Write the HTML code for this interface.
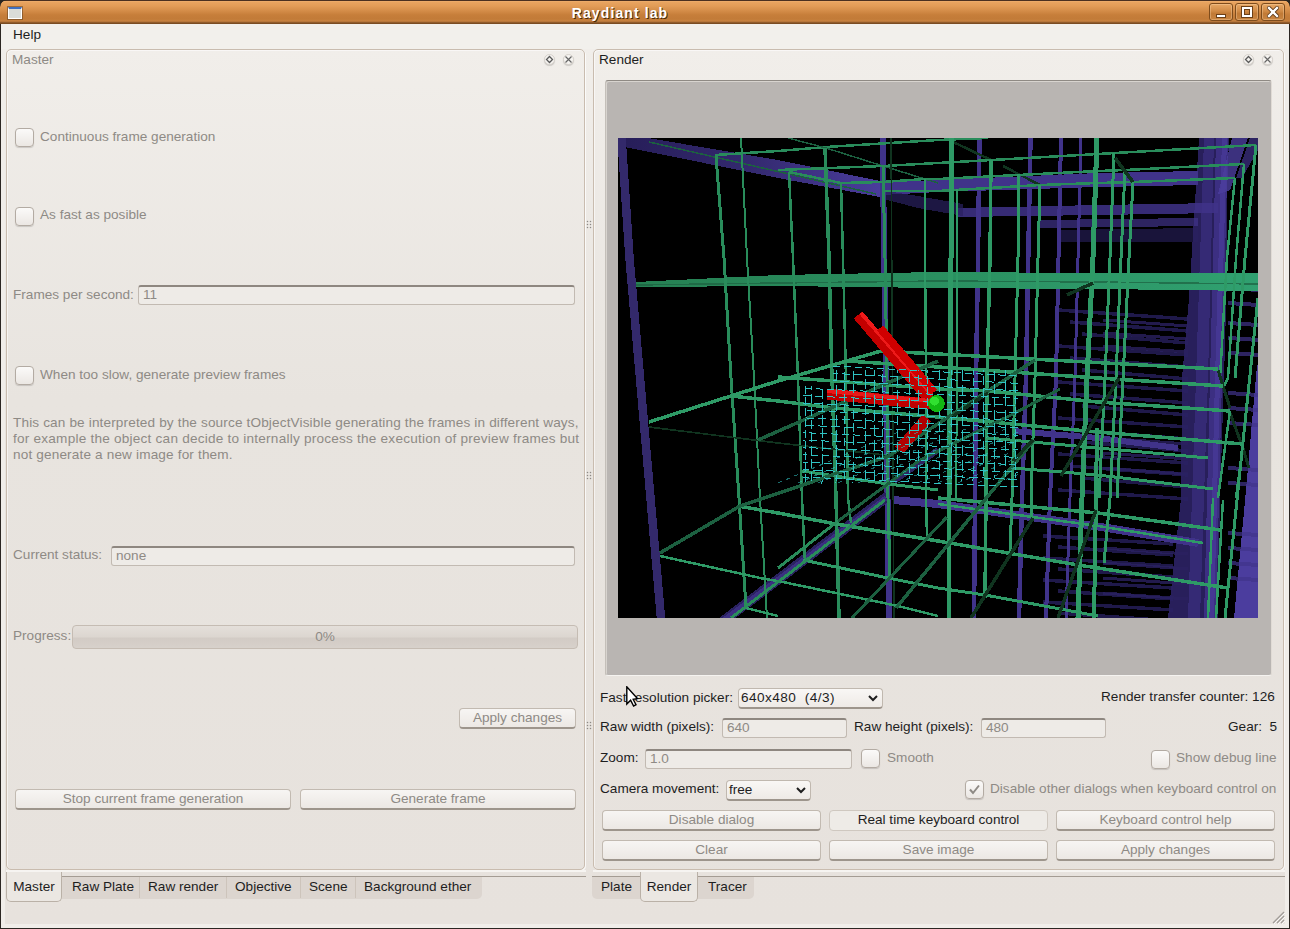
<!DOCTYPE html>
<html><head><meta charset="utf-8">
<style>
*{box-sizing:border-box;margin:0;padding:0}
html,body{width:1290px;height:929px;overflow:hidden;background:#2a2520}
body{font-family:"Liberation Sans",sans-serif;font-size:13.6px;color:#1e1e1e;position:relative}
.a{position:absolute}
.win{left:0;top:0;width:1290px;height:929px;background:#2b2622;border-radius:7px 7px 3px 3px;overflow:hidden}
.cont{left:1px;top:24px;width:1288px;height:904px;background:#f0ede9}
.inner{left:5px;top:49px;width:1280px;height:875px;background:linear-gradient(#f1eeea,#e8e4df 40%,#e7e2dd)}
.title{left:0;top:0;width:1290px;height:24px;background:linear-gradient(#4a3020 0,#4a3020 1px,#f0b272 1px,#e8a460 2px,#e29c57 6px,#d38c48 11px,#c67e3a 15px,#c27b38 19px,#c88241 21px,#a86c35 22px,#7a4c22 23px,#7a4c22 24px);border-radius:7px 7px 0 0}
.ttext{left:0;top:5px;width:1240px;text-align:center;color:#fff;font-weight:bold;font-size:14px;line-height:16px;text-shadow:1px 1px 0 #4a2a08;letter-spacing:1.1px}
.wbtn{top:3px;width:24px;height:18px;border:1px solid #7e4c1c;border-radius:3px;background:linear-gradient(#e7a866,#d08a45 45%,#c17a36 60%,#c98541);box-shadow:inset 0 0 0 1px rgba(255,220,180,.35)}
.menu{left:1px;top:24px;width:1288px;height:25px;background:#f2f0ec}
.lbl{white-space:nowrap;line-height:16px;height:16px}
.dis{color:#8e8a85}
.frame{border:1px solid #c9bcaf;border-radius:5px;box-shadow:1px 1px 0 rgba(255,255,255,.75),inset 1px 1px 0 rgba(255,255,255,.55)}
.chk{width:19px;height:19px;border:1px solid #b3aba3;border-radius:4px;background:linear-gradient(#fbfaf9,#ebe7e3);box-shadow:0 1px 1px rgba(0,0,0,.15)}
.inp{border:1px solid #c2bab2;border-top:2px solid #8e8780;border-radius:3px;background:#eeebe7;color:#8e8a85;padding-left:4px;line-height:16px}
.btn{border:1px solid #c2bab1;border-bottom:2px solid #9d958c;border-radius:4px;background:linear-gradient(#f7f5f3,#ece8e4);text-align:center;color:#8e8a85;line-height:17px}
.combo{border:1px solid #c0b8af;border-bottom:2px solid #9d958c;border-radius:4px;background:linear-gradient(#f9f7f5,#eeeae6);color:#1e1e1e;padding-left:2px;line-height:17px}
.tab{height:23px;background:#dcd5cf;border-top:1px solid #a49c93;line-height:21px;text-align:center;border-right:1px solid #cfc7bf}
.tabsel{background:#ebe7e2;border:1px solid #bab1a7;border-top:none;border-radius:0 0 5px 5px;line-height:16px;padding-top:7px;text-align:center}
.dock{width:11px;height:11px;border-radius:6px;border:1px solid #d6d1cb;background:#f5f3f0;box-shadow:0 1px 1px rgba(0,0,0,.15)}
.dots{width:6px;height:9px;background-image:radial-gradient(circle at 1.5px 1.5px,#8d8985 0.8px,transparent 1.2px);background-size:3px 3px}
</style></head><body>
<div class="a win">
  <div class="a cont"></div>
  <div class="a inner"></div>
  <div class="a title"></div>
  <div class="a" style="left:8px;top:7px;width:14px;height:12px;border:1px solid #fff;border-top:2px solid #3f6fc0;background:#dadcd8;box-shadow:0 0 0 1px rgba(90,60,30,.5)"></div>
  <div class="a ttext">Raydiant lab</div>
  <div class="a wbtn" style="left:1209px"><div class="a" style="left:6px;top:10px;width:10px;height:4px;background:#fff;border:1px solid #6b4018"></div></div>
  <div class="a wbtn" style="left:1235px"><div class="a" style="left:6px;top:3px;width:10px;height:10px;border:2px solid #fff;box-shadow:0 0 0 1px #6b4018,inset 0 0 0 1px #6b4018"></div></div>
  <div class="a wbtn" style="left:1261px"><svg class="a" style="left:5px;top:2px" width="12" height="12"><path d="M2 2L10 10M10 2L2 10" stroke="#5a3515" stroke-width="4" stroke-linecap="square"/><path d="M2 2L10 10M10 2L2 10" stroke="#fff" stroke-width="2.4" stroke-linecap="square"/></svg></div>
  <div class="a menu"></div>
  <div class="a lbl" style="left:13px;top:27px">Help</div>

  <!-- MASTER DOCK -->
  <div class="a frame" style="left:6px;top:49px;width:579px;height:821px"></div>
  <div class="a lbl dis" style="left:12px;top:52px">Master</div>
  <div class="a dock" style="left:544px;top:54px"></div>
  <svg class="a" style="left:544px;top:54px" width="11" height="11"><path d="M5.5 2.5L8.5 5.5L5.5 8.5L2.5 5.5Z" fill="none" stroke="#5a5a5a" stroke-width="1.3"/></svg>
  <div class="a dock" style="left:563px;top:54px"></div>
  <svg class="a" style="left:563px;top:54px" width="11" height="11"><path d="M2.5 2.5L8.5 8.5M8.5 2.5L2.5 8.5" stroke="#666" stroke-width="1.2"/></svg>

  <div class="a chk" style="left:15px;top:128px"></div>
  <div class="a lbl dis" style="left:40px;top:129px">Continuous frame generation</div>
  <div class="a chk" style="left:15px;top:207px"></div>
  <div class="a lbl dis" style="left:40px;top:207px">As fast as posible</div>
  <div class="a lbl dis" style="left:13px;top:287px">Frames per second:</div>
  <div class="a inp" style="left:138px;top:285px;width:437px;height:20px">11</div>
  <div class="a chk" style="left:15px;top:366px"></div>
  <div class="a lbl dis" style="left:40px;top:367px">When too slow, generate preview frames</div>
  <div class="a lbl dis" style="left:13px;top:415px;letter-spacing:0.14px">This can be interpreted by the source tObjectVisible generating the frames in different ways,</div>
  <div class="a lbl dis" style="left:13px;top:431px;letter-spacing:0.22px">for example the object can decide to internally process the execution of preview frames but</div>
  <div class="a lbl dis" style="left:13px;top:447px;letter-spacing:0.15px">not generate a new image for them.</div>
  <div class="a lbl dis" style="left:13px;top:547px">Current status:</div>
  <div class="a inp" style="left:111px;top:546px;width:464px;height:20px">none</div>
  <div class="a lbl dis" style="left:13px;top:628px">Progress:</div>
  <div class="a" style="left:72px;top:625px;width:506px;height:24px;border:1px solid #c5bcb3;border-radius:4px;background:linear-gradient(#e4dfda,#dcd6d0 50%,#d2cbc5 55%,#d7d1cb);text-align:center;color:#8e8a85;line-height:21px">0%</div>
  <div class="a btn" style="left:459px;top:708px;width:117px;height:21px">Apply changes</div>
  <div class="a btn" style="left:15px;top:789px;width:276px;height:21px">Stop current frame generation</div>
  <div class="a btn" style="left:300px;top:789px;width:276px;height:21px">Generate frame</div>

  <!-- splitter -->
  <svg class="a" style="left:586px;top:220px" width="6" height="9"><circle cx="1.5" cy="1.5" r="0.75" fill="#8e8a86"/><circle cx="1.5" cy="4.5" r="0.75" fill="#8e8a86"/><circle cx="1.5" cy="7.5" r="0.75" fill="#8e8a86"/><circle cx="4.5" cy="1.5" r="0.75" fill="#8e8a86"/><circle cx="4.5" cy="4.5" r="0.75" fill="#8e8a86"/><circle cx="4.5" cy="7.5" r="0.75" fill="#8e8a86"/></svg>
  <svg class="a" style="left:586px;top:471px" width="6" height="9"><circle cx="1.5" cy="1.5" r="0.75" fill="#8e8a86"/><circle cx="1.5" cy="4.5" r="0.75" fill="#8e8a86"/><circle cx="1.5" cy="7.5" r="0.75" fill="#8e8a86"/><circle cx="4.5" cy="1.5" r="0.75" fill="#8e8a86"/><circle cx="4.5" cy="4.5" r="0.75" fill="#8e8a86"/><circle cx="4.5" cy="7.5" r="0.75" fill="#8e8a86"/></svg>
  <svg class="a" style="left:586px;top:721px" width="6" height="9"><circle cx="1.5" cy="1.5" r="0.75" fill="#8e8a86"/><circle cx="1.5" cy="4.5" r="0.75" fill="#8e8a86"/><circle cx="1.5" cy="7.5" r="0.75" fill="#8e8a86"/><circle cx="4.5" cy="1.5" r="0.75" fill="#8e8a86"/><circle cx="4.5" cy="4.5" r="0.75" fill="#8e8a86"/><circle cx="4.5" cy="7.5" r="0.75" fill="#8e8a86"/></svg>

  <!-- RENDER DOCK -->
  <div class="a frame" style="left:593px;top:49px;width:691px;height:821px"></div>
  <div class="a lbl" style="left:599px;top:52px">Render</div>
  <div class="a dock" style="left:1243px;top:54px"></div>
  <svg class="a" style="left:1243px;top:54px" width="11" height="11"><path d="M5.5 2.5L8.5 5.5L5.5 8.5L2.5 5.5Z" fill="none" stroke="#5a5a5a" stroke-width="1.3"/></svg>
  <div class="a dock" style="left:1262px;top:54px"></div>
  <svg class="a" style="left:1262px;top:54px" width="11" height="11"><path d="M2.5 2.5L8.5 8.5M8.5 2.5L2.5 8.5" stroke="#666" stroke-width="1.2"/></svg>

  <div class="a" style="left:605px;top:80px;width:667px;height:596px;border:1px solid #8f8a84;border-left-color:#c4bfb9;border-right-color:#e0dbd5;border-bottom-color:#f5f3f0;border-radius:3px;background:#b9b5b2;box-shadow:inset 1px 1px 0 #d8d4cf"></div>
  <div class="a" id="r3d" style="left:618px;top:138px;width:640px;height:480px;background:#000;overflow:hidden"><svg width="640" height="480" viewBox="0 0 640 480" style="position:absolute;left:0;top:0" shape-rendering="crispEdges"><polygon points="581,0 611,0 609,52 609,137 606,240 602,360 600,480 550,480 563,360 564,240 571,160" fill="#2a2160" fill-opacity="0.95" /><polygon points="586,0 596,0 590,240 582,480 570,480 578,240" fill="#40338a" fill-opacity="0.55" /><polygon points="598,0 610,0 604,240 598,480 586,480 592,240" fill="#40338a" fill-opacity="0.85" /><polygon points="604,0 609,0 602,240 596,480 591,480 597,240" fill="#4b3d9e" fill-opacity="0.6" /><polygon points="614,0 630,0 612,52 600,56" fill="#4b3d9e" fill-opacity="0.8" /><polygon points="632,0 640,0 640,12 624,40 618,40" fill="#40338a" fill-opacity="0.7" /><polygon points="639,227 640,227 640,480 616,480 628,352" fill="#4b3d9e" fill-opacity="1" /><polyline points="610,150 640,152" fill="none" stroke="#40338a" stroke-width="4" stroke-opacity="0.7" /><polyline points="610,165 640,167" fill="none" stroke="#40338a" stroke-width="4" stroke-opacity="0.7" /><polyline points="610,185 640,187" fill="none" stroke="#40338a" stroke-width="4" stroke-opacity="0.7" /><polyline points="610,200 640,202" fill="none" stroke="#40338a" stroke-width="4" stroke-opacity="0.7" /><polyline points="610,215 640,217" fill="none" stroke="#40338a" stroke-width="4" stroke-opacity="0.7" /><polyline points="610,255 640,257" fill="none" stroke="#40338a" stroke-width="4" stroke-opacity="0.7" /><polyline points="610,270 640,272" fill="none" stroke="#40338a" stroke-width="4" stroke-opacity="0.7" /><polyline points="610,285 640,287" fill="none" stroke="#40338a" stroke-width="4" stroke-opacity="0.7" /><polyline points="610,330 640,332" fill="none" stroke="#40338a" stroke-width="4" stroke-opacity="0.7" /><polyline points="610,345 640,347" fill="none" stroke="#40338a" stroke-width="4" stroke-opacity="0.7" /><polyline points="610,395 640,397" fill="none" stroke="#40338a" stroke-width="4" stroke-opacity="0.7" /><polyline points="610,410 640,412" fill="none" stroke="#40338a" stroke-width="4" stroke-opacity="0.7" /><polyline points="610,425 640,427" fill="none" stroke="#40338a" stroke-width="4" stroke-opacity="0.7" /><polyline points="610,440 640,442" fill="none" stroke="#40338a" stroke-width="4" stroke-opacity="0.7" /><polygon points="265,44 320,42 480,35 580,33 580,47 480,49 320,54 265,57" fill="#40338a" fill-opacity="1" /><polygon points="340,70 480,67 600,65 600,75 480,77 340,79" fill="#40338a" fill-opacity="0.85" /><polygon points="420,82 580,80 580,88 420,90" fill="#40338a" fill-opacity="0.7" /><polygon points="440,92 580,90 580,104 440,104" fill="#2a2160" fill-opacity="0.6" /><polyline points="485,182 570,188" fill="none" stroke="#2a2160" stroke-width="3" stroke-opacity="0.8" /><polyline points="485,195 570,201" fill="none" stroke="#2a2160" stroke-width="3" stroke-opacity="0.8" /><polyline points="485,208 570,214" fill="none" stroke="#2a2160" stroke-width="3" stroke-opacity="0.8" /><polyline points="485,300 570,306" fill="none" stroke="#2a2160" stroke-width="3" stroke-opacity="0.8" /><polyline points="485,315 570,321" fill="none" stroke="#2a2160" stroke-width="3" stroke-opacity="0.8" /><polyline points="485,330 570,336" fill="none" stroke="#2a2160" stroke-width="3" stroke-opacity="0.8" /><polyline points="485,410 570,416" fill="none" stroke="#2a2160" stroke-width="3" stroke-opacity="0.8" /><polyline points="485,425 570,431" fill="none" stroke="#2a2160" stroke-width="3" stroke-opacity="0.8" /><polyline points="485,440 570,446" fill="none" stroke="#2a2160" stroke-width="3" stroke-opacity="0.8" /><polyline points="485,455 570,461" fill="none" stroke="#2a2160" stroke-width="3" stroke-opacity="0.8" /><polyline points="440,172 570,181" fill="none" stroke="#2a2163" stroke-width="3.5" stroke-opacity="0.75" /><polyline points="452,184 570,193" fill="none" stroke="#2a2163" stroke-width="3.5" stroke-opacity="0.75" /><polyline points="464,196 570,205" fill="none" stroke="#2a2163" stroke-width="3.5" stroke-opacity="0.75" /><polyline points="440,208 570,217" fill="none" stroke="#2a2163" stroke-width="3.5" stroke-opacity="0.75" /><polyline points="452,220 570,229" fill="none" stroke="#2a2163" stroke-width="3.5" stroke-opacity="0.75" /><polyline points="464,232 570,241" fill="none" stroke="#2a2163" stroke-width="3.5" stroke-opacity="0.75" /><polyline points="440,244 570,253" fill="none" stroke="#2a2163" stroke-width="3.5" stroke-opacity="0.75" /><polyline points="452,256 570,265" fill="none" stroke="#2a2163" stroke-width="3.5" stroke-opacity="0.75" /><polyline points="464,268 570,277" fill="none" stroke="#2a2163" stroke-width="3.5" stroke-opacity="0.75" /><polyline points="440,280 570,289" fill="none" stroke="#2a2163" stroke-width="3.5" stroke-opacity="0.75" /><polyline points="452,292 570,301" fill="none" stroke="#2a2163" stroke-width="3.5" stroke-opacity="0.75" /><polyline points="464,304 570,313" fill="none" stroke="#2a2163" stroke-width="3.5" stroke-opacity="0.75" /><polyline points="440,316 570,325" fill="none" stroke="#2a2163" stroke-width="3.5" stroke-opacity="0.75" /><polyline points="452,328 570,337" fill="none" stroke="#2a2163" stroke-width="3.5" stroke-opacity="0.75" /><polyline points="464,340 570,349" fill="none" stroke="#2a2163" stroke-width="3.5" stroke-opacity="0.75" /><polyline points="440,352 570,361" fill="none" stroke="#2a2163" stroke-width="3.5" stroke-opacity="0.75" /><polyline points="425,398 555,406" fill="none" stroke="#2a2163" stroke-width="3.5" stroke-opacity="0.75" /><polyline points="440,409 555,417" fill="none" stroke="#2a2163" stroke-width="3.5" stroke-opacity="0.75" /><polyline points="425,420 555,428" fill="none" stroke="#2a2163" stroke-width="3.5" stroke-opacity="0.75" /><polyline points="440,431 555,439" fill="none" stroke="#2a2163" stroke-width="3.5" stroke-opacity="0.75" /><polyline points="425,442 555,450" fill="none" stroke="#2a2163" stroke-width="3.5" stroke-opacity="0.75" /><polyline points="440,453 555,461" fill="none" stroke="#2a2163" stroke-width="3.5" stroke-opacity="0.75" /><polyline points="425,464 555,472" fill="none" stroke="#2a2163" stroke-width="3.5" stroke-opacity="0.75" /><polyline points="440,475 555,483" fill="none" stroke="#2a2163" stroke-width="3.5" stroke-opacity="0.75" /><defs><linearGradient id="tb" x1="0" y1="0" x2="262" y2="0" gradientUnits="userSpaceOnUse"><stop offset="0" stop-color="#261d58"/><stop offset="0.5" stop-color="#33296e"/><stop offset="1" stop-color="#4a3c9c"/></linearGradient></defs><polygon points="0,0 30,0 160,22 262,43 262,59 160,40 7,9 0,9" fill="url(#tb)" fill-opacity="1" /><polygon points="262,52 300,58 345,66 345,78 300,70 262,60" fill="#2a2160" fill-opacity="0.7" /><polyline points="3.5,0 11.5,120 22,240 32.5,360 43,480" fill="none" stroke="#33296b" stroke-width="8.5" stroke-opacity="1" /><polyline points="264.5,0 268,240 271,480" fill="none" stroke="#40338a" stroke-width="6" stroke-opacity="1" /><polyline points="361.5,0 360,120 358,240 357,360 356,480" fill="none" stroke="#40338a" stroke-width="4.5" stroke-opacity="1" /><polyline points="412.5,0 408,240 404,360 401,480" fill="none" stroke="#40338a" stroke-width="4.5" stroke-opacity="1" /><polyline points="443,0 438,240 432,360 428,480" fill="none" stroke="#40338a" stroke-width="4" stroke-opacity="1" /><polyline points="463,0 457,240 452,360 448,480" fill="none" stroke="#40338a" stroke-width="3" stroke-opacity="1" /><polyline points="104,484 270,358" fill="none" stroke="#2a2160" stroke-width="10" stroke-opacity="1" /><polyline points="106,482 268,360" fill="none" stroke="#40338a" stroke-width="5" stroke-opacity="0.8" /><polyline points="276,343 320,312" fill="none" stroke="#40338a" stroke-width="6" stroke-opacity="0.7" /><polyline points="275,362 320,366 480,388.5 580,405" fill="none" stroke="#40338a" stroke-width="8" stroke-opacity="1" /><polyline points="395,293 480,300 560,310" fill="none" stroke="#40338a" stroke-width="6" stroke-opacity="1" /><defs><linearGradient id="gb" x1="0" y1="0" x2="640" y2="0" gradientUnits="userSpaceOnUse"><stop offset="0" stop-color="#257f52"/><stop offset="0.5" stop-color="#2a9060"/><stop offset="1" stop-color="#30a070"/></linearGradient></defs><polygon points="18,144 160,137 320,134 480,135 640,135.5 640,153 480,151 320,150 160,148 18,149" fill="url(#gb)" fill-opacity="1" /><polyline points="18,147 160,145 320,143 480,144 640,146" fill="none" stroke="#1c6040" stroke-width="1.5" stroke-opacity="0.7" /><polyline points="97,17 160,13 208,9 320,2 370,0" fill="none" stroke="#298c5b" stroke-width="2.5" stroke-opacity="1" /><polyline points="31,4 258,56" fill="none" stroke="#1c6040" stroke-width="1.5" stroke-opacity="1" /><polyline points="170,0 208,10 265,28 307,41 320,45" fill="none" stroke="#1c6040" stroke-width="1.5" stroke-opacity="1" /><polyline points="333,3 373,22" fill="none" stroke="#10341f" stroke-width="2.5" stroke-opacity="1" /><polyline points="385,28 422,47" fill="none" stroke="#10341f" stroke-width="2.5" stroke-opacity="1" /><polyline points="160,32 265,28 320,25 374,22 480,16 497,15 638,7" fill="none" stroke="#298c5b" stroke-width="2.5" stroke-opacity="1" /><polyline points="171,34 223,45 265,44 307,41 320,41 400,37 480,33 507,32 626,26" fill="none" stroke="#298c5b" stroke-width="2.5" stroke-opacity="1" /><polyline points="265,53 320,53 422,47 480,45 515,44 617,40" fill="none" stroke="#298c5b" stroke-width="2.5" stroke-opacity="1" /><polyline points="98,18 106,120 113,240 121,360 128,470" fill="none" stroke="#298c5b" stroke-width="3" stroke-opacity="1" /><polyline points="123,0 129,120 136,240 142,360 149,480" fill="none" stroke="#298c5b" stroke-width="2" stroke-opacity="1" /><polyline points="171,34 175,120 180,240 184,360 187,425" fill="none" stroke="#298c5b" stroke-width="2.5" stroke-opacity="1" /><polyline points="207,10 211,120 214,240 218,360 221,480" fill="none" stroke="#298c5b" stroke-width="3.5" stroke-opacity="1" /><polyline points="223,45 225,120 228,240 230,360 233,385" fill="none" stroke="#298c5b" stroke-width="2.5" stroke-opacity="1" /><polyline points="265,28 267,120 269,240 270,360 272,440" fill="none" stroke="#298c5b" stroke-width="3" stroke-opacity="1" /><polyline points="273,0 276,480" fill="none" stroke="#10341f" stroke-width="1.5" stroke-opacity="1" /><polyline points="307,41 307,120 308,240 308,360 309,398" fill="none" stroke="#2e9a66" stroke-width="2.5" stroke-opacity="1" /><polyline points="333,0 333,120 332,240 331,360 331,480" fill="none" stroke="#2e9a66" stroke-width="5" stroke-opacity="1" /><polyline points="339,51 339,240 338,360" fill="none" stroke="#2e9a66" stroke-width="2" stroke-opacity="1" /><polyline points="373,22 372,120 369,240 368,360 367,460" fill="none" stroke="#2e9a66" stroke-width="3.5" stroke-opacity="1" /><polyline points="401,36 400,120 397,240 394,360 392,415" fill="none" stroke="#2e9a66" stroke-width="3" stroke-opacity="1" /><polyline points="422,47 420,120 417,240 413,360 413,380" fill="none" stroke="#2e9a66" stroke-width="3" stroke-opacity="1" /><polyline points="479,0 475,120 469,240 464,360 460,480" fill="none" stroke="#2e9a66" stroke-width="5" stroke-opacity="1" /><polyline points="479,290 478,360 476,480" fill="none" stroke="#2e9a66" stroke-width="4" stroke-opacity="1" /><polyline points="496,15 492,120 487,240 481,360" fill="none" stroke="#2e9a66" stroke-width="3" stroke-opacity="1" /><polyline points="507,32 503,120 498,240 492,360 486,425" fill="none" stroke="#2e9a66" stroke-width="3" stroke-opacity="1" /><polyline points="515,44 511,120 505,240 499,360" fill="none" stroke="#2e9a66" stroke-width="3" stroke-opacity="1" /><polyline points="638,7 627,120 617,240" fill="none" stroke="#2e9a66" stroke-width="3" stroke-opacity="1" /><polyline points="626,26 618,120 610,240 605,250" fill="none" stroke="#2e9a66" stroke-width="2.5" stroke-opacity="1" /><polyline points="617,40 609,120 602,240" fill="none" stroke="#2e9a66" stroke-width="2.5" stroke-opacity="1" /><polyline points="640,160 620,352 607,480" fill="none" stroke="#2e9a66" stroke-width="3" stroke-opacity="1" /><polyline points="600,232 612,270" fill="none" stroke="#10341f" stroke-width="3" stroke-opacity="1" /><polyline points="612,275 625,310 631,330" fill="none" stroke="#10341f" stroke-width="3" stroke-opacity="1" /><polyline points="605,362 598,480" fill="none" stroke="#2e9a66" stroke-width="2.5" stroke-opacity="1" /><polyline points="595,360 590,480" fill="none" stroke="#2e9a66" stroke-width="2.5" stroke-opacity="1" /><polyline points="612,273 600,360" fill="none" stroke="#2e9a66" stroke-width="2.5" stroke-opacity="1" /><polyline points="625,306 618,360" fill="none" stroke="#2e9a66" stroke-width="2.5" stroke-opacity="1" /><polyline points="31,284 160,243 263,213 320,216 480,224.6 600,231" fill="none" stroke="#2e9a66" stroke-width="3.5" stroke-opacity="1" /><polyline points="228,223 320,229 480,240 605,248" fill="none" stroke="#2e9a66" stroke-width="3.5" stroke-opacity="1" /><polyline points="160,239 216,243 320,251 370,253 480,264 612,273" fill="none" stroke="#2e9a66" stroke-width="3.5" stroke-opacity="1" /><polyline points="113,258 160,263 216,270 320,279 480,294 625,306" fill="none" stroke="#2e9a66" stroke-width="3.5" stroke-opacity="1" /><polyline points="370,300 480,310 590,320" fill="none" stroke="#2e9a66" stroke-width="3.0" stroke-opacity="1" /><polyline points="184,333 270,346 320,352" fill="none" stroke="#2e9a66" stroke-width="3.0" stroke-opacity="1" /><polyline points="395,330 480,337 595,351" fill="none" stroke="#2e9a66" stroke-width="3.0" stroke-opacity="1" /><polyline points="120,368 160,375 218,386 320,403 460,427 480,430 610,450" fill="none" stroke="#2e9a66" stroke-width="3.5" stroke-opacity="1" /><polyline points="185,422 270,440 320,450 367,457 480,478" fill="none" stroke="#2e9a66" stroke-width="3.0" stroke-opacity="1" /><polyline points="42,418 147,441 160,443 280,468 320,478" fill="none" stroke="#2e9a66" stroke-width="2.5" stroke-opacity="1" /><polyline points="128,470 160,478" fill="none" stroke="#2e9a66" stroke-width="2.5" stroke-opacity="1" /><polyline points="320,360 480,375 602,392" fill="none" stroke="#2e9a66" stroke-width="3.5" stroke-opacity="1" /><polyline points="320,366 480,388 585,405" fill="none" stroke="#2e9a66" stroke-width="2.5" stroke-opacity="1" /><polyline points="31,289 160,305 276,318" fill="none" stroke="#10341f" stroke-width="1.7" stroke-opacity="1" /><polyline points="42,415 122,368 271,318 417,222" fill="none" stroke="#1c6040" stroke-width="3.5" stroke-opacity="1" /><polyline points="140,302 320,223" fill="none" stroke="#1c6040" stroke-width="3.5" stroke-opacity="1" /><polyline points="113,480 160,444 267,362" fill="none" stroke="#298c5b" stroke-width="3.0" stroke-opacity="1" /><polyline points="160,430 220,383 302,322 395,276 442,251" fill="none" stroke="#1c6040" stroke-width="3.0" stroke-opacity="1" /><polyline points="160,430 220,383" fill="none" stroke="#298c5b" stroke-width="3.0" stroke-opacity="1" /><polyline points="234,480 328.5,379.4" fill="none" stroke="#1c6040" stroke-width="3.0" stroke-opacity="1" /><polyline points="278,470 416,302" fill="none" stroke="#1c6040" stroke-width="3.5" stroke-opacity="1" /><polyline points="353,480 415,380" fill="none" stroke="#10341f" stroke-width="3.5" stroke-opacity="1" /><polyline points="440,480 478,372" fill="none" stroke="#10341f" stroke-width="3.5" stroke-opacity="1" /><polyline points="335,278 370,255" fill="none" stroke="#10341f" stroke-width="3.5" stroke-opacity="1" /><polyline points="395,323 415,302" fill="none" stroke="#10341f" stroke-width="3.5" stroke-opacity="1" /><polyline points="443,338 501,240" fill="none" stroke="#10341f" stroke-width="3.5" stroke-opacity="1" /><polyline points="449,157 475,145" fill="none" stroke="#10341f" stroke-width="3.5" stroke-opacity="1" /><polyline points="497,20 515,44" fill="none" stroke="#10341f" stroke-width="3.5" stroke-opacity="1" /><defs><linearGradient id="rg" x1="0" y1="0" x2="1" y2="1"><stop offset="0" stop-color="#ff1a1a"/><stop offset="1" stop-color="#9a0000"/></linearGradient></defs><polyline points="309,280 281,312" fill="none" stroke="#b00000" stroke-width="11" stroke-opacity="1" /><polyline points="240,177 312,262" fill="none" stroke="#c40000" stroke-width="11" stroke-opacity="1" /><polyline points="243,175 314,257" fill="none" stroke="#ee1a1a" stroke-width="4" stroke-opacity="1" /><polyline points="262,190 316,254" fill="none" stroke="#d00000" stroke-width="8" stroke-opacity="1" /><polyline points="209,256 312,266" fill="none" stroke="#c00000" stroke-width="11" stroke-opacity="1" /><polyline points="209,253 312,263" fill="none" stroke="#e81818" stroke-width="4" stroke-opacity="1" /><g><line x1="188.0" y1="248.0" x2="187.0" y2="346.0" stroke="#30c4c4" stroke-width="1" stroke-dasharray="8 3" stroke-dashoffset="0"/><line x1="194.0" y1="248.0" x2="193.0" y2="345.9" stroke="#30c4c4" stroke-width="1" stroke-dasharray="9 4" stroke-dashoffset="5"/><line x1="205.0" y1="248.0" x2="204.0" y2="345.7" stroke="#30c4c4" stroke-width="1" stroke-dasharray="10 3" stroke-dashoffset="10"/><line x1="219.0" y1="232.0" x2="218.0" y2="345.4" stroke="#30c4c4" stroke-width="1" stroke-dasharray="11 4" stroke-dashoffset="15"/><line x1="227.0" y1="232.0" x2="226.0" y2="345.2" stroke="#30c4c4" stroke-width="1" stroke-dasharray="8 3" stroke-dashoffset="20"/><line x1="236.0" y1="232.0" x2="235.0" y2="345.0" stroke="#30c4c4" stroke-width="1" stroke-dasharray="9 4" stroke-dashoffset="25"/><line x1="248.0" y1="232.0" x2="247.0" y2="344.8" stroke="#30c4c4" stroke-width="1" stroke-dasharray="10 3" stroke-dashoffset="30"/><line x1="257.0" y1="232.0" x2="256.0" y2="344.6" stroke="#30c4c4" stroke-width="1" stroke-dasharray="11 4" stroke-dashoffset="35"/><line x1="265.0" y1="232.0" x2="264.0" y2="344.5" stroke="#30c4c4" stroke-width="1" stroke-dasharray="8 3" stroke-dashoffset="40"/><line x1="280.0" y1="232.0" x2="279.0" y2="344.2" stroke="#30c4c4" stroke-width="1" stroke-dasharray="9 4" stroke-dashoffset="45"/><line x1="292.0" y1="232.0" x2="291.0" y2="343.9" stroke="#30c4c4" stroke-width="1" stroke-dasharray="10 3" stroke-dashoffset="50"/><line x1="301.0" y1="232.0" x2="300.0" y2="343.7" stroke="#30c4c4" stroke-width="1" stroke-dasharray="11 4" stroke-dashoffset="55"/><line x1="310.0" y1="232.0" x2="309.0" y2="343.6" stroke="#30c4c4" stroke-width="1" stroke-dasharray="8 3" stroke-dashoffset="60"/><line x1="322.0" y1="232.0" x2="321.0" y2="343.3" stroke="#30c4c4" stroke-width="1" stroke-dasharray="9 4" stroke-dashoffset="65"/><line x1="334.0" y1="232.0" x2="333.0" y2="343.1" stroke="#30c4c4" stroke-width="1" stroke-dasharray="10 3" stroke-dashoffset="70"/><line x1="345.0" y1="232.0" x2="344.0" y2="342.9" stroke="#30c4c4" stroke-width="1" stroke-dasharray="11 4" stroke-dashoffset="75"/><line x1="356.0" y1="232.0" x2="355.0" y2="342.6" stroke="#30c4c4" stroke-width="1" stroke-dasharray="8 3" stroke-dashoffset="80"/><line x1="366.0" y1="232.0" x2="365.0" y2="342.4" stroke="#30c4c4" stroke-width="1" stroke-dasharray="9 4" stroke-dashoffset="85"/><line x1="377.0" y1="232.0" x2="376.0" y2="342.2" stroke="#30c4c4" stroke-width="1" stroke-dasharray="10 3" stroke-dashoffset="90"/><line x1="388.0" y1="232.0" x2="387.0" y2="342.0" stroke="#30c4c4" stroke-width="1" stroke-dasharray="11 4" stroke-dashoffset="95"/><line x1="398.0" y1="248.0" x2="397.0" y2="341.8" stroke="#30c4c4" stroke-width="1" stroke-dasharray="8 3" stroke-dashoffset="100"/><line x1="215" y1="228.0" x2="400" y2="238.0" stroke="#30c4c4" stroke-width="1" stroke-dasharray="7 4" stroke-dashoffset="0"/><line x1="215" y1="235.4" x2="400" y2="245.4" stroke="#30c4c4" stroke-width="1" stroke-dasharray="8 4" stroke-dashoffset="3"/><line x1="215" y1="242.8" x2="400" y2="252.8" stroke="#30c4c4" stroke-width="1" stroke-dasharray="9 4" stroke-dashoffset="6"/><line x1="185" y1="250.2" x2="400" y2="260.2" stroke="#30c4c4" stroke-width="1" stroke-dasharray="7 4" stroke-dashoffset="9"/><line x1="185" y1="257.6" x2="400" y2="267.6" stroke="#30c4c4" stroke-width="1" stroke-dasharray="8 4" stroke-dashoffset="12"/><line x1="185" y1="265.0" x2="400" y2="275.0" stroke="#30c4c4" stroke-width="1" stroke-dasharray="9 4" stroke-dashoffset="15"/><line x1="185" y1="272.4" x2="400" y2="282.4" stroke="#30c4c4" stroke-width="1" stroke-dasharray="7 4" stroke-dashoffset="18"/><line x1="185" y1="279.8" x2="400" y2="289.8" stroke="#30c4c4" stroke-width="1" stroke-dasharray="8 4" stroke-dashoffset="21"/><line x1="185" y1="287.2" x2="400" y2="297.2" stroke="#30c4c4" stroke-width="1" stroke-dasharray="9 4" stroke-dashoffset="24"/><line x1="185" y1="294.6" x2="400" y2="304.6" stroke="#30c4c4" stroke-width="1" stroke-dasharray="7 4" stroke-dashoffset="27"/><line x1="185" y1="302.0" x2="400" y2="312.0" stroke="#30c4c4" stroke-width="1" stroke-dasharray="8 4" stroke-dashoffset="30"/><line x1="185" y1="309.4" x2="400" y2="319.4" stroke="#30c4c4" stroke-width="1" stroke-dasharray="9 4" stroke-dashoffset="33"/><line x1="185" y1="316.8" x2="400" y2="326.8" stroke="#30c4c4" stroke-width="1" stroke-dasharray="7 4" stroke-dashoffset="36"/><line x1="185" y1="324.2" x2="400" y2="334.2" stroke="#30c4c4" stroke-width="1" stroke-dasharray="8 4" stroke-dashoffset="39"/><line x1="185" y1="331.6" x2="400" y2="341.6" stroke="#30c4c4" stroke-width="1" stroke-dasharray="9 4" stroke-dashoffset="42"/><line x1="185" y1="339.0" x2="400" y2="349.0" stroke="#30c4c4" stroke-width="1" stroke-dasharray="7 4" stroke-dashoffset="45"/><line x1="160" y1="345" x2="290" y2="290.0" stroke="#30c4c4" stroke-width="1" stroke-opacity="0.55" stroke-dasharray="4 5"/><line x1="180" y1="345" x2="310" y2="290.0" stroke="#30c4c4" stroke-width="1" stroke-opacity="0.55" stroke-dasharray="4 5"/><line x1="200" y1="345" x2="330" y2="290.0" stroke="#30c4c4" stroke-width="1" stroke-opacity="0.55" stroke-dasharray="4 5"/><line x1="220" y1="345" x2="350" y2="290.0" stroke="#30c4c4" stroke-width="1" stroke-opacity="0.55" stroke-dasharray="4 5"/><line x1="240" y1="345" x2="370" y2="290.0" stroke="#30c4c4" stroke-width="1" stroke-opacity="0.55" stroke-dasharray="4 5"/><line x1="260" y1="345" x2="390" y2="290.0" stroke="#30c4c4" stroke-width="1" stroke-opacity="0.55" stroke-dasharray="4 5"/><line x1="280" y1="345" x2="400" y2="294.2" stroke="#30c4c4" stroke-width="1" stroke-opacity="0.55" stroke-dasharray="4 5"/><line x1="300" y1="345" x2="400" y2="302.7" stroke="#30c4c4" stroke-width="1" stroke-opacity="0.55" stroke-dasharray="4 5"/><line x1="320" y1="345" x2="400" y2="311.2" stroke="#30c4c4" stroke-width="1" stroke-opacity="0.55" stroke-dasharray="4 5"/><line x1="340" y1="345" x2="400" y2="319.6" stroke="#30c4c4" stroke-width="1" stroke-opacity="0.55" stroke-dasharray="4 5"/><line x1="360" y1="345" x2="400" y2="328.1" stroke="#30c4c4" stroke-width="1" stroke-opacity="0.55" stroke-dasharray="4 5"/><line x1="380" y1="345" x2="400" y2="336.5" stroke="#30c4c4" stroke-width="1" stroke-opacity="0.55" stroke-dasharray="4 5"/></g><circle cx="318.5" cy="265.5" r="8.4" fill="#12b812"/><circle cx="316.5" cy="263" r="4.5" fill="#30e030"/></svg></div>
  <div class="a lbl" style="left:600px;top:690px">Fast resolution picker:</div>
  <div class="a combo" style="left:738px;top:688px;width:145px;height:21px;letter-spacing:0.45px">640x480&nbsp; (4/3)</div>
  <svg class="a" style="left:867px;top:693px" width="12" height="10"><path d="M2 3L6 7L10 3" fill="none" stroke="#1e1e1e" stroke-width="2"/></svg>
  <div class="a lbl" style="left:1101px;top:689px">Render transfer counter: 126</div>
  <div class="a lbl" style="left:600px;top:719px">Raw width (pixels):</div>
  <div class="a inp" style="left:722px;top:718px;width:125px;height:20px">640</div>
  <div class="a lbl" style="left:854px;top:719px">Raw height (pixels):</div>
  <div class="a inp" style="left:981px;top:718px;width:125px;height:20px">480</div>
  <div class="a lbl" style="left:1228px;top:719px">Gear:&nbsp; 5</div>
  <div class="a lbl" style="left:600px;top:750px">Zoom:</div>
  <div class="a inp" style="left:645px;top:749px;width:207px;height:20px">1.0</div>
  <div class="a chk" style="left:861px;top:749px"></div>
  <div class="a lbl dis" style="left:887px;top:750px">Smooth</div>
  <div class="a chk" style="left:1151px;top:750px"></div>
  <div class="a lbl dis" style="left:1176px;top:750px">Show debug line</div>
  <div class="a lbl" style="left:600px;top:781px">Camera movement:</div>
  <div class="a combo" style="left:726px;top:780px;width:85px;height:21px">free</div>
  <svg class="a" style="left:795px;top:785px" width="12" height="10"><path d="M2 3L6 7L10 3" fill="none" stroke="#1e1e1e" stroke-width="2"/></svg>
  <div class="a chk" style="left:965px;top:780px"></div>
  <svg class="a" style="left:967px;top:782px" width="15" height="15"><path d="M3 7.5L6 11L12 3.5" fill="none" stroke="#8e8a85" stroke-width="2"/></svg>
  <div class="a lbl dis" style="left:990px;top:781px">Disable other dialogs when keyboard control on</div>

  <div class="a btn" style="left:602px;top:810px;width:219px;height:21px">Disable dialog</div>
  <div class="a" style="left:829px;top:810px;width:219px;height:21px;border:1px solid #cfc8c0;border-radius:4px;background:#eeebe7;text-align:center;line-height:18px;color:#1e1e1e">Real time keyboard control</div>
  <div class="a btn" style="left:1056px;top:810px;width:219px;height:21px">Keyboard control help</div>
  <div class="a btn" style="left:602px;top:840px;width:219px;height:21px">Clear</div>
  <div class="a btn" style="left:829px;top:840px;width:219px;height:21px">Save image</div>
  <div class="a btn" style="left:1056px;top:840px;width:219px;height:21px">Apply changes</div>

  <!-- TABS master -->
  <div class="a" style="left:6px;top:870px;width:580px;height:2px;background:#f6f4f1"></div>
  <div class="a" style="left:62px;top:876px;width:420px;height:23px;background:#dcd5cf;border-radius:0 0 5px 0;border-top:1px solid #a49c93"></div>
  <div class="a" style="left:482px;top:876px;width:104px;height:1px;background:#a49c93"></div>
  <div class="a tabsel" style="left:6px;top:872px;width:56px;height:30px">Master</div>
  <div class="a lbl" style="left:72px;top:879px">Raw Plate</div>
  <div class="a" style="left:139px;top:877px;width:1px;height:21px;background:#cdc4bb"></div>
  <div class="a lbl" style="left:148px;top:879px">Raw render</div>
  <div class="a" style="left:226px;top:877px;width:1px;height:21px;background:#cdc4bb"></div>
  <div class="a lbl" style="left:235px;top:879px">Objective</div>
  <div class="a" style="left:300px;top:877px;width:1px;height:21px;background:#cdc4bb"></div>
  <div class="a lbl" style="left:309px;top:879px">Scene</div>
  <div class="a" style="left:355px;top:877px;width:1px;height:21px;background:#cdc4bb"></div>
  <div class="a lbl" style="left:364px;top:879px">Background ether</div>

  <!-- TABS render -->
  <div class="a" style="left:593px;top:870px;width:692px;height:2px;background:#f6f4f1"></div>
  <div class="a" style="left:592px;top:876px;width:162px;height:23px;background:#dcd5cf;border-radius:0 0 5px 5px;border-top:1px solid #a49c93"></div>
  <div class="a" style="left:753px;top:876px;width:532px;height:1px;background:#a49c93"></div>
  <div class="a tabsel" style="left:640px;top:872px;width:58px;height:30px">Render</div>
  <div class="a lbl" style="left:601px;top:879px">Plate</div>
  <div class="a lbl" style="left:708px;top:879px">Tracer</div>

  <svg class="a" style="left:626px;top:686px" width="14" height="22"><path d="M0.8 0.8L0.8 18L4.6 14.2L7.6 20L10 18.8L7.2 13.2L11.4 12.6Z" fill="#fff" stroke="#000" stroke-width="1.4" stroke-linejoin="miter"/></svg>
  <!-- size grip -->
  <svg class="a" style="left:1270px;top:909px" width="16" height="16"><path d="M14 3L3 14M14 7L7 14M14 11L11 14" stroke="#a09c98" stroke-width="1.3"/><path d="M15 4L4 15M15 8L8 15M15 12L12 15" stroke="#fff" stroke-width="0.8"/></svg>
</div>
</body></html>
